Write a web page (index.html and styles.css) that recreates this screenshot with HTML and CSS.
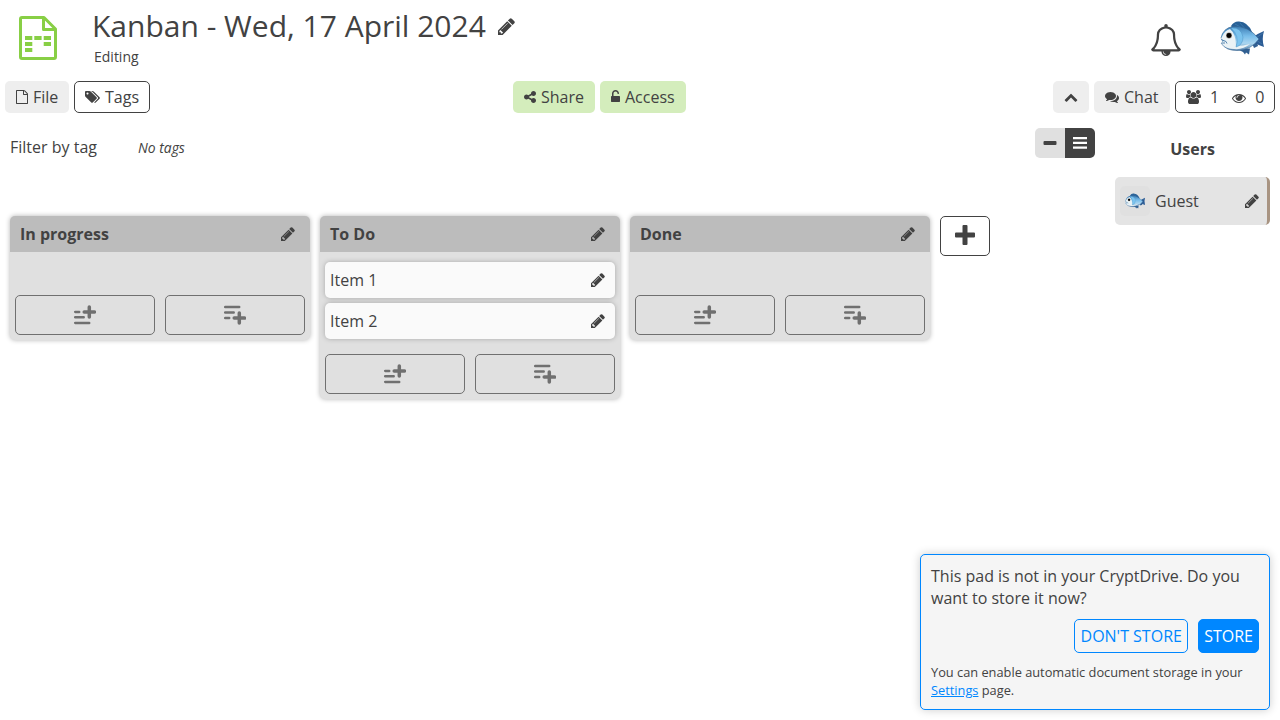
FILE: index.html
```html
<!DOCTYPE html>
<html lang="en">
<head>
<meta charset="utf-8">
<title>Kanban</title>
<link rel="stylesheet" href="styles.css">
</head>
<body>
<svg class="defs" aria-hidden="true">
  <symbol id="pencil" viewBox="128 128 1536 1536"><path d="M491 1536l91-91-235-235-91 91v107h128v128h107zm523-928q0-22-22-22-10 0-17 7l-542 542q-7 7-7 17 0 22 22 22 10 0 17-7l542-542q7-7 7-17zm-54-192l416 416-832 832h-416v-416zm683 96q0 53-37 90l-166 166-416-416 166-165q36-38 90-38 53 0 91 38l235 234q37 39 37 91z"/></symbol>
  <symbol id="add-top" viewBox="0 0 22 20"><path d="M1.200 6.900h4M1.200 12.300h8.500M1.200 17.900h14" stroke="currentColor" stroke-width="2.500" stroke-linecap="round"/><path d="M10.200 7h10.300M15.300 2v10" stroke="currentColor" stroke-width="3.500" stroke-linecap="round"/></symbol>
  <symbol id="add-bottom" viewBox="0 0 22 20"><path d="M1.200 2.100h14M1.200 7.500h8.500M1.200 13.100h4" stroke="currentColor" stroke-width="2.500" stroke-linecap="round"/><path d="M10.200 13.100h10.300M15.300 8.100v10" stroke="currentColor" stroke-width="3.500" stroke-linecap="round"/></symbol>
  <linearGradient id="fish-body" x1="0" y1="0" x2="0" y2="1"><stop offset="0" stop-color="#3c7db4"/><stop offset=".4" stop-color="#78bdea"/><stop offset=".7" stop-color="#a9d5f0"/><stop offset="1" stop-color="#5d86ad"/></linearGradient>
  <symbol id="fish" viewBox="0 0 44 34">
    <path d="M11 5Q14 0 19 .5Q28 1 32 11L27 15L14 9Z" fill="#286096"/>
    <path d="M15 3l9 5M20 2l7 8" stroke="#3f7cae" stroke-width=".8"/>
    <path d="M17 28l6 3 2 2.500 1-2 3 2 1-6ZM32 22l2 5 4-2-1-4Z" fill="#315f91"/>
    <path d="M33 16Q39 12 44 10Q41.500 18 44 26Q38 24 33 21Z" fill="#2b5b94"/>
    <path d="M36 17l7-5M36 19l6 4" stroke="#4478aa" stroke-width=".8"/>
    <path d="M1 17Q3 7 13 5.500Q28 4 39 18Q31 29 18 29.500Q6 30 1 22L3 20Z" fill="url(#fish-body)" stroke="#315f8d" stroke-width=".6"/>
    <path d="M2 16Q5 9 10 8Q16 13 16 25Q23 25 30 23Q23 29 14 28Q7 28 3 24L1 21L5 20L1 18Z" fill="#eaf2f5"/>
    <path d="M11 7Q21 6 23 16Q23 24 16 26Q20 15 11 7Z" fill="#7bc3ee" stroke="#4c95c4" stroke-width=".5"/>
    <path d="M1 18.500l5 2 1 2M2 22l3 0" fill="none" stroke="#497caa" stroke-width=".9"/>
    <circle cx="9" cy="14.500" r="3" fill="#8d867d"/><circle cx="9" cy="14.500" r="2.400" fill="#000"/>
  </symbol>
</svg>

<header class="header">
  <svg class="doc-icon" viewBox="0 0 38 44"><path d="M3 1.500H25L36.500 13V41Q36.500 42.500 35 42.500H3Q1.500 42.500 1.500 41V3Q1.500 1.500 3 1.500ZM24.500 2V13.500H36" fill="none" stroke="#88cf45" stroke-width="3" stroke-linejoin="round"/><path d="M6 20h7.300v4H6zM15.300 20h7.300v4h-7.300zM24.700 20h7.300v4h-7.300zM6 26h7.300v4H6zM24.700 26h7.300v4h-7.300zM6 32h7.300v4H6z" fill="#88cf45"/></svg>
  <div class="titles">
    <div class="title">Kanban - Wed, 17 April 2024 <svg class="title-pencil"><use href="#pencil"/></svg></div>
    <div class="status">Editing</div>
  </div>
  <svg class="bell" viewBox="0 0 1792 1792"><path d="M912 1696q0-16-16-16-59 0-101.500-42.500t-42.500-101.500q0-16-16-16t-16 16q0 73 51.500 124.500t124.500 51.500q16 0 16-16zM246 1408h1300q-266-300-266-832 0-51-24-105t-69-103-121.500-80.500-169.500-31.500-169.500 31.500-121.500 80.500-69 103-24 105q0 532-266 832zm1482 0q0 52-38 90t-90 38h-448q0 106-75 181t-181 75-181-75-75-181h-448q-52 0-90-38t-38-90q50-42 91-88t85-119.500 74.500-158.500 50-206 19.500-260q0-152 117-282.500t307-158.500q-8-19-8-39 0-40 28-68t68-28 68 28 28 68q0 20-8 39 190 28 307 158.500t117 282.500q0 139 19.500 260t50 206 74.500 158.500 85 119.500 91 88z"/></svg>
  <svg class="avatar"><use href="#fish"/></svg>
</header>

<nav class="toolbar">
  <div class="group">
    <button class="btn file"><svg width="12" height="14" viewBox="128 0 1536 1792"><path d="M1596 380q28 28 48 76t20 88v1152q0 40-28 68t-68 28h-1344q-40 0-68-28t-28-68v-1600q0-40 28-68t68-28h896q40 0 88 20t76 48zm-444-244v376h376q-10-29-22-41l-313-313q-12-12-41-22zm384 1528v-1024h-416q-40 0-68-28t-28-68v-416h-768v1536h1280z"/></svg>File</button>
    <button class="btn outlined tags"><svg width="15" height="14" viewBox="0 0 1920 1792"><path d="M448 448q0-53-37.500-90.500t-90.500-37.500-90.500 37.500-37.500 90.500 37.500 90.500 90.500 37.500 90.500-37.500 37.500-90.500zm1067 576q0 53-37 90l-491 492q-39 37-91 37-53 0-90-37l-715-716q-38-37-64.500-101t-26.500-117v-416q0-52 38-90t90-38h416q53 0 117 26.500t102 64.500l715 714q37 39 37 91zm384 0q0 53-37 90l-491 492q-39 37-91 37-36 0-59-14t-53-45l470-470q37-37 37-90 0-52-37-91l-715-714q-38-38-102-64.500t-117-26.500h224q53 0 117 26.500t102 64.500l715 714q37 39 37 91z"/></svg>Tags</button>
  </div>
  <div class="group center">
    <button class="btn green share"><svg width="12" height="14" viewBox="128 0 1536 1792"><path d="M1344 1024q133 0 226.500 93.500t93.500 226.500-93.500 226.500-226.500 93.500-226.500-93.500-93.500-226.500q0-12 2-34l-360-180q-92 86-218 86-133 0-226.500-93.500t-93.500-226.500 93.500-226.500 226.500-93.500q126 0 218 86l360-180q-2-22-2-34 0-133 93.500-226.500t226.500-93.500 226.500 93.500 93.500 226.500-93.500 226.500-226.500 93.500q-126 0-218-86l-360 180q2 22 2 34t-2 34l360 180q92-86 218-86z"/></svg>Share</button>
    <button class="btn green access"><svg width="9" height="14" viewBox="320 0 1152 1792"><path d="M1376 768q40 0 68 28t28 68v576q0 40-28 68t-68 28h-960q-40 0-68-28t-28-68v-576q0-40 28-68t68-28h32v-320q0-185 131.500-316.500t316.500-131.500 316.500 131.500 131.500 316.500q0 26-19 45t-45 19h-64q-26 0-45-19t-19-45q0-106-75-181t-181-75-181 75-75 181v320h736z"/></svg>Access</button>
  </div>
  <div class="group right">
    <button class="btn collapse"><svg width="14" height="14" viewBox="0 0 1792 1792"><path d="M1683 1331l-166 165q-19 19-45 19t-45-19l-531-531-531 531q-19 19-45 19t-45-19l-166-165q-19-19-19-45.500t19-45.500l742-741q19-19 45-19t45 19l742 741q19 19 19 45.500t-19 45.500z"/></svg></button>
    <button class="btn chat"><svg width="14" height="14" viewBox="0 0 1792 1792"><path d="M1408 768q0 139-94 257t-256.500 186.500-353.500 68.500q-86 0-176-16-124 88-278 128-36 9-86 16h-3q-11 0-20.500-8t-11.500-21q-1-3-1-6.500t.5-6.500 2-6l2.500-5 3.500-5.500 4-5 4.500-5 4-4.500q5-6 23-25t26-29.500 22.500-29 25-38.500 20.500-44q-124-72-195-177t-71-224q0-139 94-257t256.500-186.500 353.500-68.500 353.500 68.500 256.500 186.500 94 257zm384 256q0 120-71 224.500t-195 176.500q10 24 20.500 44t25 38.500 22.500 29 26 29.500 23 25q1 1 4 4.500t4.500 5 4 5 3.500 5.500l2.500 5 2 6 .5 6.500-1 6.500q-3 14-13 22t-22 7q-50-7-86-16-154-40-278-128-90 16-176 16-271 0-472-132 58 4 88 4 161 0 309-45t264-129q125-92 192-212t67-254q0-77-23-152 129 71 204 178t75 230z"/></svg>Chat</button>
    <button class="btn outlined counts"><svg width="15" height="14" viewBox="0 0 1920 1792"><path d="M593 896q-162 5-265 128h-134q-82 0-138-40.500t-56-118.500q0-353 124-353 6 0 43.500 21t97.500 42.500 119 21.500q67 0 133-23-5 37-5 66 0 139 81 256zm1071 637q0 120-73 189.500t-194 69.500h-874q-121 0-194-69.500t-73-189.500q0-53 3.500-103.500t14-109 26.500-108.500 43-97.500 62-81 85.500-53.500 111.500-20q10 0 43 21.500t73 48 107 48 135 21.500 135-21.500 107-48 73-48 43-21.500q61 0 111.500 20t85.500 53.500 62 81 43 97.500 26.500 108.500 14 109 3.500 103.500zm-1024-1277q0 106-75 181t-181 75-181-75-75-181 75-181 181-75 181 75 75 181zm704 384q0 159-112.500 271.500t-271.500 112.500-271.500-112.500-112.500-271.500 112.500-271.500 271.500-112.500 271.500 112.500 112.500 271.500zm576 225q0 78-56 118.500t-138 40.500h-134q-103-123-265-128 81-117 81-256 0-29-5-66 66 23 133 23 59 0 119-21.500t97.500-42.500 43.500-21q124 0 124 353zm-128-609q0 106-75 181t-181 75-181-75-75-181 75-181 181-75 181 75 75 181z"/></svg><span class="editors">1</span><svg class="eye" width="14" height="14" viewBox="0 0 1792 1792"><path d="M1664 960q-152-236-381-353 61 104 61 225 0 185-131.500 316.500t-316.500 131.500-316.500-131.500-131.500-316.500q0-121 61-225-229 117-381 353 133 205 333.500 326.500t434.500 121.500 434.500-121.500 333.500-326.500zm-720-384q0-20-14-34t-34-14q-125 0-214.500 89.500t-89.500 214.500q0 20 14 34t34 14 34-14 14-34q0-86 61-147t147-61q20 0 34-14t14-34zm848 384q0 34-20 69-140 230-376.500 368.500t-499.500 138.500-499.500-139-376.500-368q-20-35-20-69t20-69q140-229 376.500-368t499.500-139 499.500 139 376.500 368q20 35 20 69z"/></svg><span>0</span></button>
  </div>
</nav>

<div class="main">
  <main class="workspace">
    <div class="filter"><span>Filter by tag</span><em>No tags</em>
      <div class="view"><span class="view-item"><svg width="14" height="14"><rect x="0.500" y="5" width="13" height="4" rx="1"/></svg></span><span class="view-item active"><svg width="14" height="14"><path d="M0 1h14v2.300H0zM0 5.700h14V8H0zM0 10.400h14v2.300H0z"/></svg></span></div>
    </div>
    <div class="boards">
      <section class="board"><h2 class="board-head">In progress<svg class="pencil"><use href="#pencil"/></svg></h2><div class="items"></div><div class="adds"><button class="add"><svg><use href="#add-top"/></svg></button><button class="add"><svg><use href="#add-bottom"/></svg></button></div></section>
      <section class="board"><h2 class="board-head">To Do<svg class="pencil"><use href="#pencil"/></svg></h2><div class="items"><div class="item">Item 1<svg class="pencil"><use href="#pencil"/></svg></div><div class="item">Item 2<svg class="pencil"><use href="#pencil"/></svg></div></div><div class="adds"><button class="add"><svg><use href="#add-top"/></svg></button><button class="add"><svg><use href="#add-bottom"/></svg></button></div></section>
      <section class="board"><h2 class="board-head">Done<svg class="pencil"><use href="#pencil"/></svg></h2><div class="items"></div><div class="adds"><button class="add"><svg><use href="#add-top"/></svg></button><button class="add"><svg><use href="#add-bottom"/></svg></button></div></section>
      <button class="new-board"><svg width="20" height="20"><path d="M8.500 0h3q1 0 1 1v6.500H19q1 0 1 1v3q0 1-1 1h-6.500V19q0 1-1 1h-3q-1 0-1-1v-6.500H1q-1 0-1-1v-3q0-1 1-1h6.500V1q0-1 1-1z"/></svg></button>
    </div>
  </main>
  <aside class="users">
    <h3 class="users-title">Users</h3>
    <div class="user"><span class="user-avatar"><svg><use href="#fish"/></svg></span><span>Guest</span><svg class="pencil"><use href="#pencil"/></svg></div>
  </aside>
</div>

<div class="popup">
  <p class="message">This pad is not in your CryptDrive. Do you want to store it now?</p>
  <div class="actions"><button class="action">DON'T STORE</button><button class="action primary">STORE</button></div>
  <p class="hint">You can enable automatic document storage in your <a href="#">Settings</a> page.</p>
</div>
</body>
</html>
```
FILE: styles.css
```css
* { box-sizing: border-box; }
body { margin: 0; height: 720px; overflow: hidden; background: #fff; color: #424242; font: 16px/22px "Open Sans", sans-serif; }
button { font: inherit; color: inherit; margin: 0; background: none; }
svg { fill: currentColor; flex: none; display: block; }
h2, h3, p { margin: 0; font-size: 16px; }
.defs { position: absolute; width: 0; height: 0; }
.header { height: 76px; display: flex; align-items: flex-start; padding-left: 19px; padding-right: 16px; }
.doc-icon { width: 38px; height: 44px; margin-top: 16px; }
.titles { margin-left: 35px; flex: 1; }
.title { display: flex; align-items: center; height: 46px; padding-top: 6px; font-size: 30px; line-height: 40px; white-space: nowrap; }
.title-pencil { width: 17px; height: 17px; margin-left: 12px; }
.status { font-size: 14px; line-height: 20px; margin-left: 2px; margin-top: 1px; }
.bell { width: 32px; height: 32px; margin-top: 24px; }
.avatar { width: 44px; height: 34px; margin-left: 38px; margin-top: 21px; }
.toolbar { display: flex; justify-content: space-between; padding: 5px 5px 0; height: 42px; }
.group { display: flex; gap: 5px; }
.center { margin-right: 4px; }
.right { justify-content: flex-end; }
.btn { height: 32px; display: flex; align-items: center; gap: 5px; border: 0; border-radius: 5px; background: #eee; padding: 0 11px; white-space: nowrap; }
.outlined { background: #fff; border: 1px solid #424242; padding: 0 10px; }
.green { background: #d4edbc; }
.file { width: 64px; }
.tags { width: 76px; }
.share { width: 82px; }
.access { width: 86px; }
.collapse { width: 36px; }
.chat { width: 76px; }
.counts { width: 100px; gap: 9px; }
.eye { margin-left: 4px; margin-top: 1px; }
.main { display: flex; height: 602px; }
.workspace { width: 1105px; padding: 10px; }
.filter { display: flex; height: 88px; align-items: flex-start; }
.filter > span { width: 128px; padding-top: 8px; }
.filter > em { font-size: 13.9px; padding-top: 9px; }
.view { margin-left: auto; display: flex; border-radius: 5px; overflow: hidden; }
.view-item { width: 30px; height: 30px; display: flex; align-items: center; justify-content: center; background: #e0e0e0; }
.active { background: #424242; color: #fff; }
.boards { display: flex; align-items: flex-start; gap: 10px; }
.board { width: 300px; border-radius: 5px; background: #e0e0e0; box-shadow: 0 0 5px rgba(0,0,0,.3); }
.board-head { height: 36px; padding: 0 15px 0 10px; display: flex; align-items: center; justify-content: space-between; background: #bcbcbc; border-radius: 5px 5px 0 0; }
.pencil { width: 14px; height: 14px; }
.items { padding: 10px 5px; min-height: 38px; display: flex; flex-direction: column; gap: 5px; }
.item { height: 36px; border-radius: 5px; background: #fafafa; padding: 0 10px 0 5px; display: flex; align-items: center; justify-content: space-between; box-shadow: 0 0 5px rgba(0,0,0,.25); }
.adds { display: flex; gap: 10px; padding: 5px; }
.add { width: 140px; height: 40px; border: 1px solid #707070; border-radius: 5px; padding: 0; display: flex; align-items: center; justify-content: center; color: #707070; }
.add svg { width: 22px; height: 20px; }
.new-board { width: 50px; height: 40px; border: 1px solid #424242; border-radius: 5px; padding: 0; display: flex; align-items: center; justify-content: center; }
.new-board svg { margin-bottom: 2px; }
.users { width: 175px; padding: 20px 10px; }
.users-title { text-align: center; margin-bottom: 17px; }
.user { height: 48px; border-radius: 5px; border-right: 3px solid #a89482; background: #e4e4e4; padding: 0 8px 0 5px; display: flex; align-items: center; }
.user .pencil { margin-left: auto; }
.user-avatar { width: 30px; height: 30px; background: #e0e0e0; border-radius: 5px; margin-right: 5px; display: flex; align-items: center; justify-content: center; }
.user-avatar svg { width: 20px; height: 16px; }
.popup { position: absolute; right: 10px; bottom: 10px; width: 350px; height: 156px; padding: 10px; border: 1px solid #0087ff; border-radius: 5px; background: #f5f5f5; box-shadow: 0 0 10px rgba(0,0,0,.2); }
.actions { display: flex; justify-content: flex-end; gap: 10px; margin: 10px 0; }
.action { height: 34px; padding: 0 5px; border: 1px solid #0087ff; border-radius: 5px; color: #0087ff; }
.action:first-child { width: 114px; }
.primary { background: #0087ff; color: #fff; }
.hint { font-size: 12.8px; line-height: 18px; }
.hint a { color: #0087ff; }
```
